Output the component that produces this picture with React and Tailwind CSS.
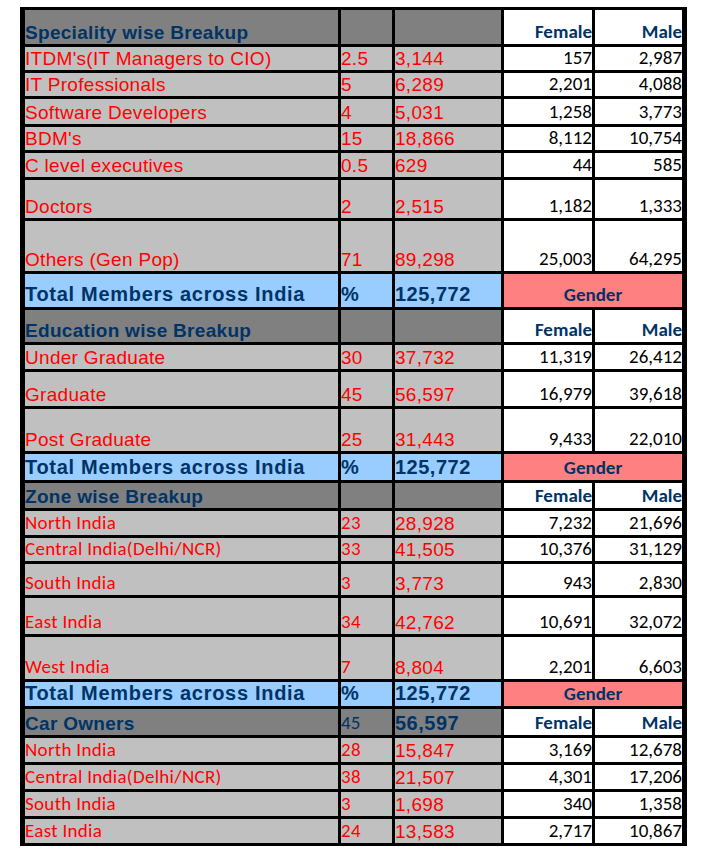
const arial = "font-['Liberation_Sans',Arial,sans-serif]";
const calibri = "font-['Carlito','Lato',sans-serif]";

const sections = [
    {
        title: "Speciality wise Breakup", titleH: 34,
        font: "arial",
        rows: [
            ["ITDM's(IT Managers to CIO)", "2.5", "3,144", "157", "2,987", 23],
            ["IT Professionals", "5", "6,289", "2,201", "4,088", 23],
            ["Software Developers", "4", "5,031", "1,258", "3,773", 25],
            ["BDM's", "15", "18,866", "8,112", "10,754", 23],
            ["C level executives", "0.5", "629", "44", "585", 24],
            ["Doctors", "2", "2,515", "1,182", "1,333", 38],
            ["Others (Gen Pop)", "71", "89,298", "25,003", "64,295", 50],
        ],
        totalH: 33,
    },
    {
        title: "Education wise Breakup", titleH: 32,
        font: "arial",
        rows: [
            ["Under Graduate", "30", "37,732", "11,319", "26,412", 24],
            ["Graduate", "45", "56,597", "16,979", "39,618", 34],
            ["Post Graduate", "25", "31,443", "9,433", "22,010", 42],
        ],
        totalH: 26,
    },
    {
        title: "Zone wise Breakup", titleH: 25,
        font: "calibri",
        rows: [
            ["North India", "23", "28,928", "7,232", "21,696", 24],
            ["Central India(Delhi/NCR)", "33", "41,505", "10,376", "31,129", 23],
            ["South India", "3", "3,773", "943", "2,830", 31],
            ["East India", "34", "42,762", "10,691", "32,072", 36],
            ["West India", "7", "8,804", "2,201", "6,603", 42],
        ],
        totalH: 24,
    },
    {
        title: "Car Owners", titleH: 26, car: ["45", "56,597"],
        font: "calibri",
        rows: [
            ["North India", "28", "15,847", "3,169", "12,678", 24],
            ["Central India(Delhi/NCR)", "38", "21,507", "4,301", "17,206", 24],
            ["South India", "3", "1,698", "340", "1,358", 24],
            ["East India", "24", "13,583", "2,717", "10,867", 24],
        ],
    },
];

const Cell = ({ className, children }) => (
    <div className={"flex items-end overflow-hidden whitespace-nowrap leading-none " + className}>{children}</div>
);

const rowGrid = "grid grid-cols-[313px_51px_106px_88px_87px] gap-x-[3px]";

const HeaderRow = ({ s }) => (
    <div className={rowGrid} style={{ height: s.titleH }}>
        <Cell className={`bg-[#808080] ${arial} font-bold text-[19px] tracking-[0.3px] text-[#003366] pb-[2px]`}>{s.title}</Cell>
        <Cell className={`bg-[#808080] ${calibri} text-[19px] text-[#003366] pb-[3px]`}>{s.car ? s.car[0] : ""}</Cell>
        <Cell className={`bg-[#808080] ${arial} font-bold text-[20px] tracking-[0.5px] text-[#003366] pb-[2px]`}>{s.car ? s.car[1] : ""}</Cell>
        <Cell className={`bg-white justify-end ${calibri} font-bold text-[19px] text-[#003366] pb-[3px]`}>Female</Cell>
        <Cell className={`bg-white justify-end ${calibri} font-bold text-[19px] text-[#003366] pb-[3px]`}>Male</Cell>
    </div>
);

const DataRow = ({ r, font }) => {
    const f = font === "arial"
        ? `${arial} text-[19px] tracking-[0.3px] pb-[2px]`
        : `${calibri} text-[19px] tracking-[0.3px] pb-[3px]`;
    return (
        <div className={rowGrid} style={{ height: r[5] }}>
            <Cell className={`bg-[#c0c0c0] text-[#ff0000] ${f}`}>{r[0]}</Cell>
            <Cell className={`bg-[#c0c0c0] text-[#ff0000] ${f}`}>{r[1]}</Cell>
            <Cell className={`bg-[#c0c0c0] text-[#ff0000] ${arial} text-[19px] tracking-[0.3px] pb-[2px]`}>{r[2]}</Cell>
            <Cell className={`bg-white justify-end text-black ${calibri} text-[19px] pb-[3px]`}>{r[3]}</Cell>
            <Cell className={`bg-white justify-end text-black ${calibri} text-[19px] pb-[3px]`}>{r[4]}</Cell>
        </div>
    );
};

const TotalRow = ({ h }) => (
    <div className={rowGrid} style={{ height: h }}>
        <Cell className={`bg-[#99ccff] ${arial} font-bold text-[20px] tracking-[0.7px] text-[#003366] pb-[3px]`}>Total Members across India</Cell>
        <Cell className={`bg-[#99ccff] ${arial} font-bold text-[20px] text-[#003366] pb-[3px]`}>%</Cell>
        <Cell className={`bg-[#99ccff] ${arial} font-bold text-[20px] tracking-[0.5px] text-[#003366] pb-[3px]`}>125,772</Cell>
        <Cell className={`col-span-2 bg-[#ff8080] justify-center ${calibri} font-bold text-[19px] text-[#003366] pb-[3px]`}>Gender</Cell>
    </div>
);

export default function App() {
    return (
        <div className="w-[703px] h-[850px] bg-white pt-[7px] pl-[20px]">
            <div className="w-fit bg-black flex flex-col gap-y-[3px] pt-[3px] pb-[3px] pl-[5px] pr-[5px]">
                {sections.map((s, i) => (
                    <div key={i} className="contents">
                        <HeaderRow s={s} />
                        {s.rows.map((r, j) => <DataRow key={j} r={r} font={s.font} />)}
                        {s.totalH && <TotalRow h={s.totalH} />}
                    </div>
                ))}
            </div>
        </div>
    );
}
